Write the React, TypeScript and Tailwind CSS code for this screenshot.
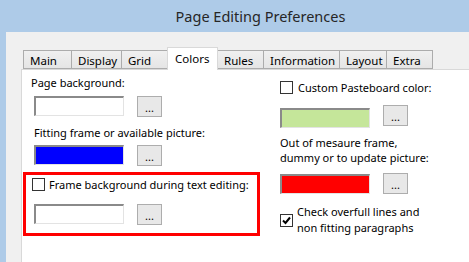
const tabs = [
  { label: 'Main', w: 'w-[48px]' },
  { label: 'Display', w: 'w-[50px]' },
  { label: 'Grid', w: 'w-[47px]' },
  { label: 'Colors', w: 'w-[51px]', active: true },
  { label: 'Rules', w: 'w-[46px]' },
  { label: 'Information', w: 'w-[76px]' },
  { label: 'Layout', w: 'w-[47px]' },
  { label: 'Extra', w: 'w-[47px]' },
];

// sunken colour well, like a classic win32 static
const ColorWell = ({ color, className = '' }: { color: string; className?: string }) => (
  <div
    className={`w-[90px] h-[20px] border-t-2 border-l-2 border-b border-r border-t-[#8a8a8a] border-l-[#8a8a8a] border-b-[#e3e3e3] border-r-[#e3e3e3] ${className}`}
    style={{ backgroundColor: color }}
  />
);

const DotsButton = ({ className = '' }: { className?: string }) => (
  <button className={`w-[25px] h-[21px] border border-[#adadad] bg-[#e8e8e8] flex items-end justify-center pb-[3px] text-[11px] leading-none text-black ${className}`}>
    ...
  </button>
);

const CheckBox = ({ checked = false }: { checked?: boolean }) => (
  <span className="w-[13px] h-[13px] shrink-0 border border-[#333333] bg-white flex items-center justify-center">
    {checked && (
      <svg width="9" height="9" viewBox="0 0 9 9">
        <path d="M1 4.5 L3.5 7 L8 1.5" fill="none" stroke="#000" strokeWidth="2" />
      </svg>
    )}
  </span>
);

export default function App() {
  return (
    <div
      className="w-[469px] h-[262px] overflow-hidden bg-[#aecbe8] flex flex-col text-black"
      style={{ fontFamily: '"Noto Sans", "Open Sans", sans-serif' }}
    >
      {/* Title bar */}
      <div className="h-[32px] shrink-0 flex items-center justify-center pl-[52px] pt-[2px] text-[14.5px] text-[#262626]">
        Page Editing Preferences
      </div>

      {/* Client area */}
      <div className="ml-[6px] flex-1 bg-[#f0f0f0] pl-[15px] pt-[15px] flex flex-col text-[11px] leading-[15px] whitespace-nowrap">
        {/* Tab strip */}
        <div className="flex items-end h-[22px] ml-[2px]">
          {tabs.map((t) =>
            t.active ? (
              <div
                key={t.label}
                className={`${t.w} h-[23px] -mb-px -mx-px relative z-10 bg-white border border-b-0 border-[#d9d9d9] pl-[7px] pt-[3px] text-[11.5px]`}
              >
                {t.label}
              </div>
            ) : (
              <div
                key={t.label}
                className={`${t.w} h-[19px] bg-gradient-to-b from-[#f0f0f0] to-[#e5e5e5] border border-r-0 last:border-r border-[#acacac] pl-[6px] pt-[2px] text-[11.5px]`}
              >
                {t.label}
              </div>
            )
          )}
        </div>

        {/* Tab panel */}
        <div className="flex-1 bg-white border-t border-l border-[#d9d9d9] flex">
          {/* Left column */}
          <div className="w-[237px] ml-[1px] flex flex-col">
            <div className="mt-[5px] pl-[8px]">Page background:</div>
            <div className="mt-[6px] pl-[11px] flex items-start gap-[13px]">
              <ColorWell color="#ffffff" />
              <DotsButton />
            </div>
            <div className="mt-[8px] pl-[11px]">Fitting frame or available picture:</div>
            <div className="mt-[5px] pl-[11px] flex items-start gap-[13px]">
              <ColorWell color="#0000ff" />
              <DotsButton />
            </div>

            <div className="mt-[6px] h-[64px] border-[3px] border-[#ff0000] flex flex-col">
              <div className="mt-[2px] pl-[6px] flex items-center gap-[4px]">
                <CheckBox />
                <span>Frame background during text editing:</span>
              </div>
              <div className="mt-[12px] pl-[8px] flex items-start gap-[13px]">
                <ColorWell color="#ffffff" />
                <DotsButton />
              </div>
            </div>
          </div>

          {/* Right column */}
          <div className="ml-[20px] flex flex-col">
            <div className="mt-[10px] flex items-center gap-[5px]">
              <CheckBox />
              <span>Custom Pasteboard color:</span>
            </div>
            <div className="mt-[10px] flex items-start gap-[13px]">
              <ColorWell color="#c5e69a" className="mt-[3px]" />
              <DotsButton />
            </div>
            <div className="mt-[7px]">
              Out of mesaure frame,
              <br />
              dummy or to update picture:
            </div>
            <div className="mt-[8px] flex items-start gap-[13px]">
              <ColorWell color="#ff0000" className="mt-[1px]" />
              <DotsButton />
            </div>
            <div className="mt-[10px] flex items-center gap-[4px]">
              <CheckBox checked />
              <span className="leading-[16px]">
                Check overfull lines and
                <br />
                non fitting paragraphs
              </span>
            </div>
          </div>
        </div>
      </div>
    </div>
  );
}
